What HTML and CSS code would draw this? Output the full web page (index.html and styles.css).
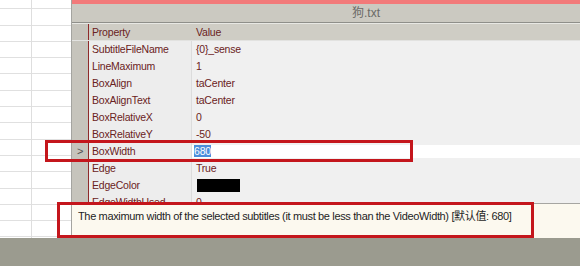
FILE: index.html
```html
<!DOCTYPE html>
<html lang="en">
  <head>
    <meta charset="UTF-8" />
    <title>狗.txt</title>
    <link rel="stylesheet" href="styles.css">
  </head>
  <body>
    <div class="desk">
      <div class="sheet"></div>
      <div class="window">
        <div class="caption"></div>
        <div class="titlebar">狗.txt</div>
        <div class="grid">
          <div class="row head">
            <div class="ind"></div>
            <div class="name">Property</div>
            <div class="value">Value</div>
          </div>
          <div class="row">
            <div class="ind"></div>
            <div class="name">SubtitleFileName</div>
            <div class="value">{0}_sense</div>
          </div>
          <div class="row">
            <div class="ind"></div>
            <div class="name">LineMaximum</div>
            <div class="value">1</div>
          </div>
          <div class="row">
            <div class="ind"></div>
            <div class="name">BoxAlign</div>
            <div class="value">taCenter</div>
          </div>
          <div class="row">
            <div class="ind"></div>
            <div class="name">BoxAlignText</div>
            <div class="value">taCenter</div>
          </div>
          <div class="row">
            <div class="ind"></div>
            <div class="name">BoxRelativeX</div>
            <div class="value">0</div>
          </div>
          <div class="row">
            <div class="ind"></div>
            <div class="name">BoxRelativeY</div>
            <div class="value">-50</div>
          </div>
          <div class="row current">
            <div class="ind">&gt;</div>
            <div class="name">BoxWidth</div>
            <div class="value"><div class="editor"><span class="selected">680</span></div></div>
          </div>
          <div class="row">
            <div class="ind"></div>
            <div class="name">Edge</div>
            <div class="value">True</div>
          </div>
          <div class="row">
            <div class="ind"></div>
            <div class="name">EdgeColor</div>
            <div class="value"><span class="swatch"></span></div>
          </div>
          <div class="row">
            <div class="ind"></div>
            <div class="name">EdgeWidthUsed</div>
            <div class="value">0</div>
          </div>
        </div>
        <div class="hint">The maximum width of the selected subtitles (it must be less than the VideoWidth) [默认值: 680]</div>
      </div>
    </div>
    <div class="taskbar"></div>

    <div class="mark mark-row"></div>
    <div class="mark mark-hint"></div>
  </body>
</html>
```

FILE: styles.css
```css
body {
  margin: 0;
  width: 580px;
  height: 266px;
  overflow: hidden;
  position: relative;
  font-family: "Liberation Sans", Arial, "Noto Sans CJK SC", sans-serif;
  font-size: 11px;
}

.desk {
  display: flex;
  height: 238px;
}

.sheet {
  width: 71px;
  background-color: #fff;
  background-image:
    linear-gradient(to right, transparent 31px, #dedede 31px, #dedede 32px, transparent 32px),
    repeating-linear-gradient(to bottom, transparent 0, transparent 8.3px, #e0e0e0 8.3px, #e0e0e0 9.3px, transparent 9.3px, transparent 16.3px);
}

.window {
  flex: 1;
  display: flex;
  flex-direction: column;
  border-left: 1px solid #a4a4a0;
  background: #cbc9c1;
  overflow: hidden;
}

.caption {
  height: 4px;
  background: #f27a7a;
}

.titlebar {
  height: 18px;
  line-height: 18px;
  padding-left: 280px;
  font-size: 12px;
  color: #6a6a66;
  border-bottom: 1px solid #8f8f8a;
}

.grid {
  flex: 1;
  overflow: hidden;
  border-top: 1px solid #e8e8e4;
  background: #efefef;
}

.row {
  display: grid;
  grid-template-columns: 17px 103px 1fr;
  height: 17px;
  line-height: 17px;
  color: #6a2222;
  font-size: 10.5px;
  letter-spacing: -0.2px;
}

.row .ind {
  background: #c6c4bc;
  border-right: 1px solid #8e2a2a;
  text-align: center;
  color: #505050;
  font-size: 11px;
}

.row .name {
  padding-left: 3px;
  border-right: 1px solid #dcdcdc;
  background: #ededed;
}

.row .value {
  padding-left: 4px;
  background: #f0f0f0;
}

.row.head {
  height: 16px;
  line-height: 16px;
  border-bottom: 1px solid #e2e2e0;
}

.row.head .name,
.row.head .value {
  background: #cfcdc5;
  border-right: none;
}

.row.current .value {
  padding: 2px 0 0 0;
}

.editor {
  height: 13px;
  line-height: 13px;
  background: #fff;
  padding-left: 2px;
}

.selected {
  background: #4b8edc;
  color: #fff;
}

.swatch {
  display: inline-block;
  width: 43px;
  height: 13px;
  margin-left: 1px;
  vertical-align: -3px;
  background: #000;
}

.hint {
  height: 35px;
  border-top: 1px solid #a6a6a2;
  background: #fcf9ef;
  padding: 6px 0 0 6px;
  box-sizing: border-box;
  line-height: 13px;
  letter-spacing: -0.35px;
  color: #1e1e1e;
}

.taskbar {
  height: 28px;
  background: #9b9b8f;
}

.mark {
  position: absolute;
  box-sizing: border-box;
  border: 3px solid #c4161c;
}

.mark-row {
  left: 45px;
  top: 140px;
  width: 368px;
  height: 22px;
}

.mark-hint {
  left: 57px;
  top: 202px;
  width: 477px;
  height: 36px;
}
```
